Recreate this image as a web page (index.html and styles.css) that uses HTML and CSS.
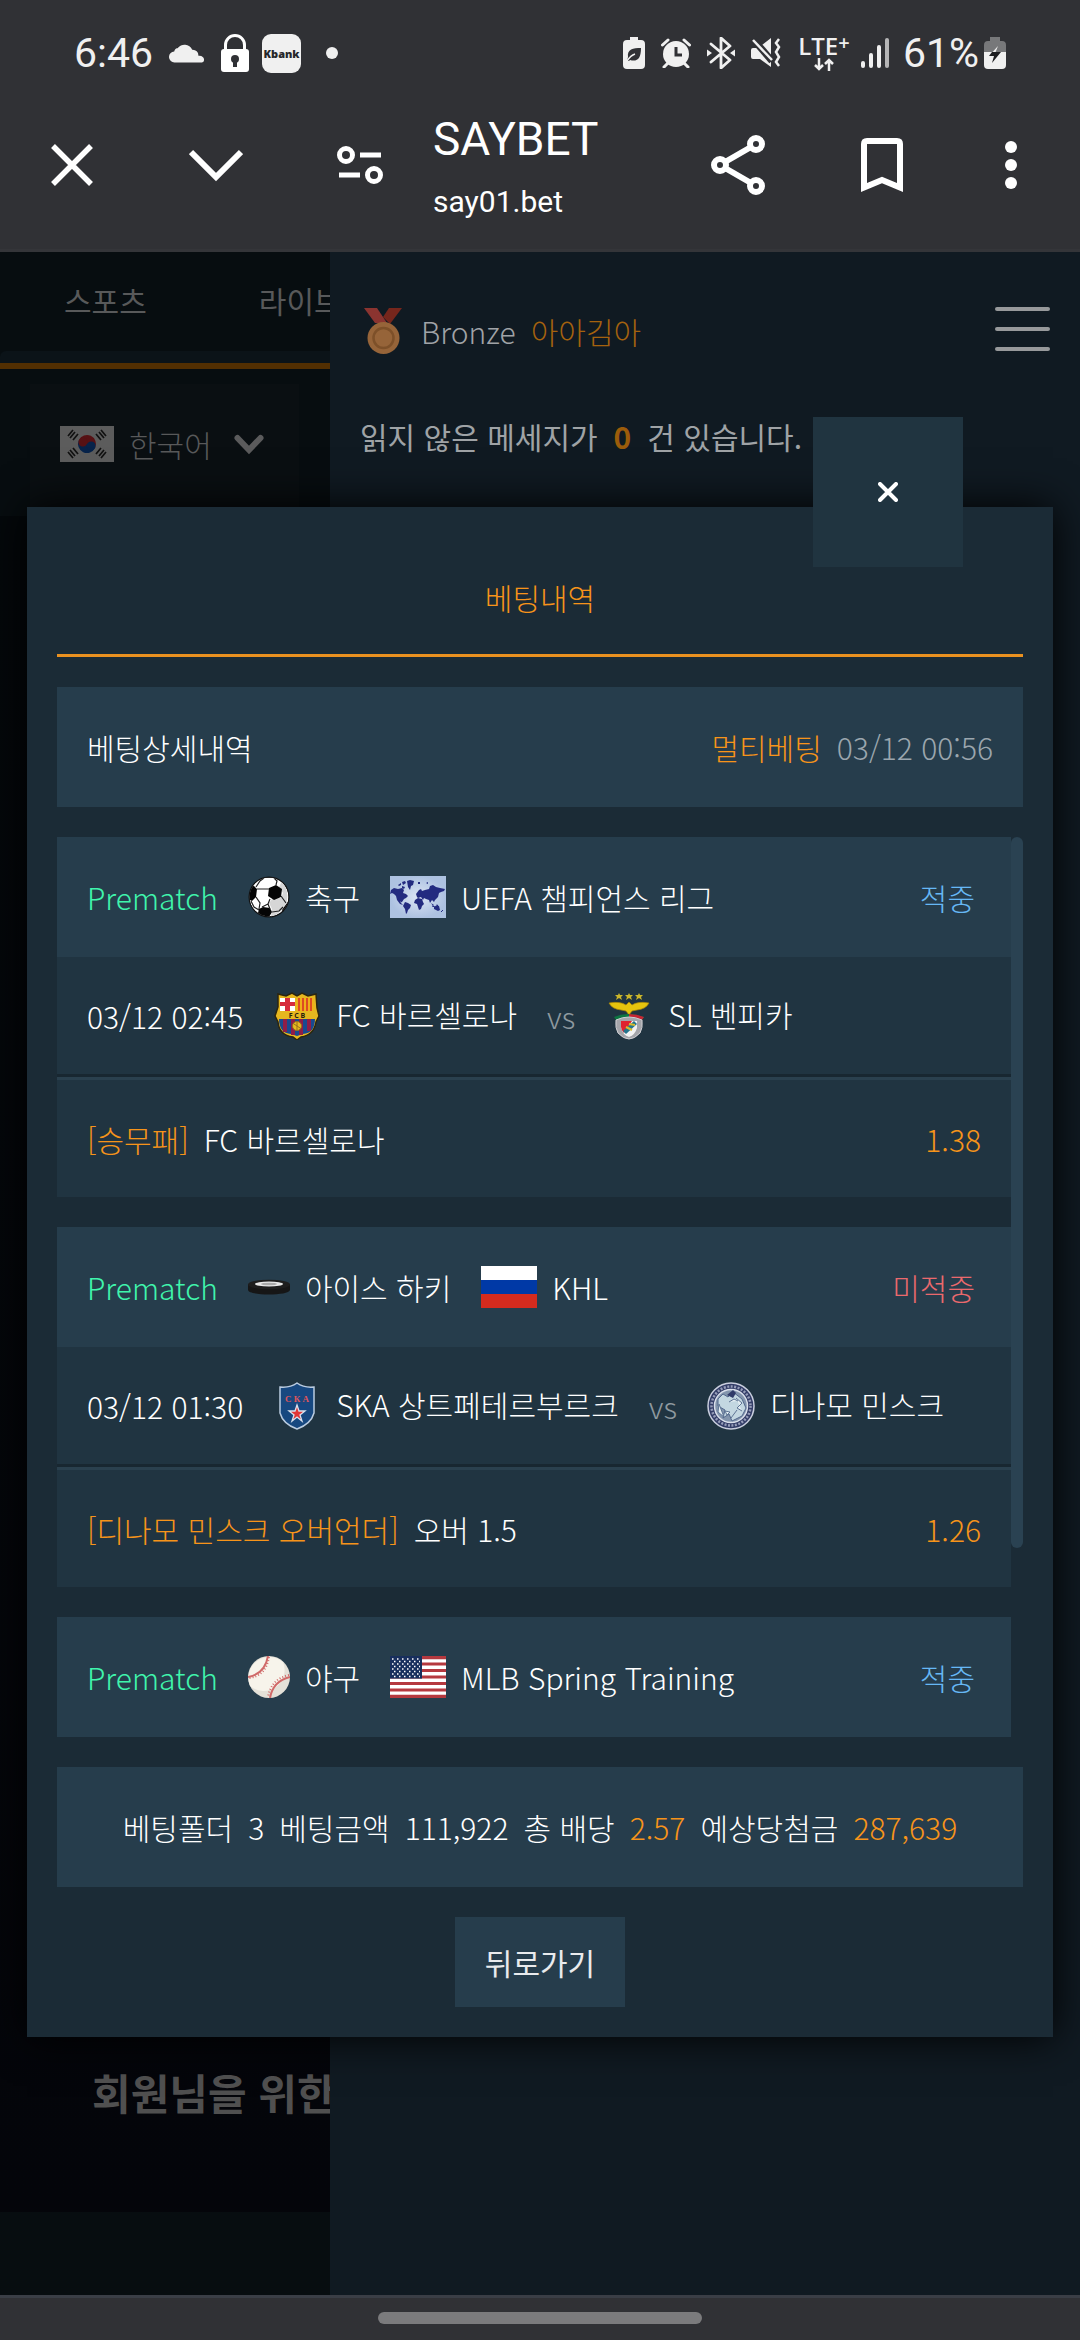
FILE: index.html
```html
<!DOCTYPE html>
<html lang="ko">
<head>
<meta charset="utf-8">
<meta name="viewport" content="width=device-width, initial-scale=1">
<title>SAYBET</title>
<link rel="stylesheet" href="styles.css">
</head>
<body>
<header class="browser">
  <div class="status">
    <span class="clock">6:46</span>
    <svg class="cloud" width="36" height="22" viewBox="0 0 38 22" fill="#f0f0f0"><path d="M6 21a5.600 5.600 0 0 1-.5-11.500C6 7 7.500 5.500 9 6A9 9 0 0 1 24.500 7.500 6 6 0 0 1 31 14c3.500-.5 6 1.500 6 4s-1.500 3-4 3z"/></svg>
    <svg class="lock" width="28" height="38" viewBox="0 0 28 38"><path d="M4.500 17V11a9.500 9.500 0 0 1 19 0v6" fill="none" stroke="#fff" stroke-width="3"/><rect y="15" width="28" height="23" rx="3" fill="#fff"/><circle cx="14" cy="25" r="4" fill="#303135"/><path d="M12 25h4v8h-4z" fill="#303135"/></svg>
    <span class="kbank">Kbank</span>
    <span class="dot"></span>
    <span class="spacer"></span>
    <svg width="22" height="32" viewBox="0 0 22 32"><path d="M7 0h8v3h3a4 4 0 0 1 4 4v21a4 4 0 0 1-4 4H4a4 4 0 0 1-4-4V7a4 4 0 0 1 4-4h3z" fill="#f0f0f0"/><path d="M18 11c-8 0-14 1-13 9l-1 4h2l1-1c7 2 11-1 11-12z" fill="#303135"/><path d="M4 24c2-3 5-6 8-7" stroke="#f0f0f0" stroke-width="1.500" fill="none"/></svg>
    <svg width="30" height="30" viewBox="0 0 30 30"><circle cx="15" cy="16" r="13" fill="#f0f0f0"/><path d="M1.500 7 7 2M28.500 7 23 2M3 29l4-4M27 29l-4-4" stroke="#f0f0f0" stroke-width="3" stroke-linecap="round"/><path d="M15 9v8h6" stroke="#303135" stroke-width="3" fill="none"/></svg>
    <svg width="28" height="32" viewBox="0 0 28 32"><path d="m4 7 19 16-9 8V1l9 8L4 25" fill="none" stroke="#f0f0f0" stroke-width="2.800" stroke-linejoin="round" stroke-linecap="round"/><path d="m0 12.500 5 3.500-5 3.500zM28 12.500 23 16l5 3.500z" fill="#f0f0f0"/></svg>
    <svg width="30" height="30" viewBox="0 0 30 30"><path d="M0 12q0-2 2-2h5L20 0v29L9 21H2q-2 0-2-2z" fill="#f0f0f0"/><path d="m2 1 19 22" stroke="#303135" stroke-width="7"/><path d="m2 2 19 20" stroke="#f0f0f0" stroke-width="2.500"/><path d="m28 1-3 4 3 4-3 5 3 5-3 5 3 4" fill="none" stroke="#f0f0f0" stroke-width="2.500"/></svg>
    <span class="lte"><b>LTE<sup>+</sup></b><svg width="20" height="13" viewBox="0 0 20 13" fill="none" stroke="#f0f0f0" stroke-width="2.500"><path d="M5 0v11M1 7l4 4 4-4M15 13V2M11 6l4-4 4 4"/></svg></span>
    <svg class="signal" width="28" height="30" viewBox="0 0 28 30"><g stroke-width="4" stroke-linecap="round" stroke="#f0f0f0"><path d="M2 25v3M10 17v11M18 9v19"/><path d="M26 2v26" stroke="#b5b5b6"/></g></svg>
    <span class="battery-text">61%</span>
    <svg class="battery" width="22" height="32" viewBox="0 0 22 32"><path d="M6 0h10v4h2a4 4 0 0 1 4 4v8H0V8a4 4 0 0 1 4-4h2z" fill="#77787a"/><path d="M0 15h22v13a4 4 0 0 1-4 4H4a4 4 0 0 1-4-4z" fill="#f0f0f0"/><path d="M14 9 5 19h5z" fill="#f0f0f0"/><path d="M10 15h7L8 26l2-7H5l3-4z" fill="#1c1d20"/></svg>
  </div>
  <div class="toolbar">
    <button aria-label="닫기"><svg width="42" height="42" viewBox="0 0 42 42"><path d="m2 2 38 38M40 2 2 40" stroke="#fff" stroke-width="5.500"/></svg></button>
    <button class="collapse" aria-label="최소화"><svg width="54" height="33" viewBox="0 0 54 33"><path d="m2 3 25 25L52 3" fill="none" stroke="#fff" stroke-width="6"/></svg></button>
    <button class="tune" aria-label="사이트 정보"><svg width="46" height="38" viewBox="0 0 46 38" fill="none" stroke="#fff" stroke-width="5"><circle cx="9" cy="9" r="6.500"/><circle cx="37" cy="29" r="6.500"/><path d="M23 9h21M2 29h21"/></svg></button>
    <div class="site"><div class="site-name">SAYBET</div><div class="site-url">say01.bet</div></div>
    <button aria-label="공유"><svg width="54" height="60" viewBox="0 0 54 60" fill="none" stroke="#fff" stroke-width="6"><circle cx="45" cy="9" r="6"/><circle cx="9" cy="30" r="6"/><circle cx="45" cy="51" r="6"/><path d="m14 27 26-15M14 33l26 15"/></svg></button>
    <button class="bookmark" aria-label="북마크"><svg width="42" height="54" viewBox="0 0 42 54"><path d="M3 49.500V6q0-3 3-3h30q3 0 3 3v43.500L21 42z" fill="none" stroke="#fff" stroke-width="6"/></svg></button>
    <button class="more" aria-label="더보기"><svg width="12" height="48" viewBox="0 0 12 48" fill="#fff"><circle cx="6" cy="6" r="6"/><circle cx="6" cy="24" r="6"/><circle cx="6" cy="42" r="6"/></svg></button>
  </div>
</header>

<main class="page">
  <section class="site-bg">
    <nav class="tabs"><a href="#">스포츠</a><a href="#">라이브</a></nav>
    <div class="tab-scroll"></div>
    <div class="lang-wrap">
      <button class="lang">
        <svg width="54" height="36" viewBox="0 0 54 36"><path fill="#5c5c5c" d="M0 0h54v36H0z"/><g transform="rotate(25 27 18)"><path d="M18 18a9 9 0 0 1 18 0z" fill="#561114"/><path d="M18 18a9 9 0 0 0 18 0z" fill="#07234a"/><circle cx="22.500" cy="18" r="4.500" fill="#561114"/><circle cx="31.500" cy="18" r="4.500" fill="#07234a"/></g><g stroke="#111" stroke-width="1.700"><path d="m8 10 5-6m-3 8 5-6m-2 8 5-6M46 10l-5-6m3 8-5-6m2 8-5-6M8 26l5 6m-3-8 5 6m-2-8 5 6M46 26l-5 6m3-8-5 6m2-8-5 6"/></g></svg>
        <span>한국어</span>
        <svg class="chev" width="30" height="21" viewBox="0 0 30 21"><path d="m3.500 4 11.500 12L26.500 4" fill="none" stroke="#5b5b5c" stroke-width="6" stroke-linecap="round"/></svg>
      </button>
    </div>
    <div class="hero"><h2>회원님을 위한</h2></div>
  </section>

  <aside class="panel">
    <div class="user">
      <svg class="medal" width="38" height="46" viewBox="0 0 38 46"><path d="M0 0h13l10 15h-12z" fill="#8b3430"/><path d="M25 0h13L26 16l-7-7z" fill="#76261c"/><circle cx="19.500" cy="30" r="16" fill="#966439"/><circle cx="19.500" cy="30" r="10" fill="#966439" stroke="#7d5029" stroke-width="2.500"/></svg>
      <span class="grade">Bronze</span><span class="nick">아아김아</span>
      <button class="menu" aria-label="메뉴"><i></i><i></i><i></i></button>
    </div>
    <p class="message">읽지 않은 메세지가<b>0</b>건 있습니다.</p>
  </aside>

  <section class="modal" role="dialog" aria-labelledby="modal-title">
    <button class="modal-close" aria-label="닫기"><svg width="20" height="20" viewBox="0 0 20 20"><path d="m2 2 16 16M18 2 2 18" stroke="#fff" stroke-width="4" stroke-linecap="round"/></svg></button>
    <h1 id="modal-title">베팅내역</h1>
    <div class="bar">
      <span>베팅상세내역</span>
      <span class="when"><span class="accent">멀티베팅</span><time>03/12 00:56</time></span>
    </div>

    <div class="scroller">
      <div class="bets">
        <article class="bet">
          <div class="bar">
            <div class="league">
              <span class="kind">Prematch</span>
              <span class="tag"><svg width="42" height="42" viewBox="0 0 42 42"><defs><clipPath id="ball"><circle cx="21" cy="21" r="19.500"/></clipPath></defs><circle cx="21" cy="21" r="20.500" fill="#111"/><g clip-path="url(#ball)"><circle cx="21" cy="21" r="19.500" fill="#fff"/><path d="M34 5q7 10 5 20-4 12-16 16l1-8-3-6 4-5h8l2-5-4-6z" fill="#d6d6d6"/><g fill="#050505"><path d="m21 12 7-3 6 4-1 8-7 3-6-4zM0 11l6-1 3 3-1 8-4 4-4-2zM11 33l4-2 7 1 2 4-3 5h-7l-4-4zM13 1l8-1 8 1-3 1H16zM39 27l2-3v5l-6 8-1-3z"/></g><path d="M9 13h12M8 21l4 6-1 6M22 23l-2 5 2 5M33 20l5 7M8 11l4-6 4-3M28 9l1-4-3-3M12 27l-1 6M3 25l3 6 5 3M24 36l7-1 4-4M20 28l-6 3" fill="none" stroke="#222" stroke-width="1.200"/></g></svg>축구</span>
              <span class="tag"><svg width="56" height="42" viewBox="0 0 56 42"><defs><radialGradient id="sea"><stop stop-color="#dbe4f4"/><stop offset="1" stop-color="#adc2e1"/></radialGradient></defs><path fill="url(#sea)" d="M0 0h56v42H0z"/><g fill="#232b80"><path d="m1 14 3-2 4 1 4-1 2 2-1 3 3 1 2 2-2 2-2 1-2 3-2-1 1 2 2 2-3-1-3-4-1-4-2-2-2-1-2 1zM8 9l3-2v2l-2 1zM12 6l3-1 1 2-3 2zM12 10l3 1-1 2-2-1zM17 5l3-1 4 1-1 4-2 1-1 4-2-3zM15 26l3 1 3 2-1 3-2 2-1 3-1 1-1-5-2-3z"/><path d="m26 18 3-4 2-1 1 2 3-1 4-1 1-3 3-1 3 2 4 1 5 1-1 2-3 1-2 1-1 4-3 3-1 2-2-2-2 3-1-3-3-1-2-1-1 2-2-3-3 1-1-1zM25 24l3-2 4 1 1 3 1 2-2 2-1 3-2 1-2-6-3-1zM44 31l3-2 2 1 1 4-2 1-4-2zM41 27l3 2-1 1zM46 28l2 1v1zM28 6h2v2h-2zM36 7l2-1v2z"/></g><path d="m51 36 2-2M42 30l3 1M9 24l3 2" stroke="#232b80"/></svg>UEFA 챔피언스 리그</span>
            </div>
            <span class="result win">적중</span>
          </div>
          <div class="match">
            <time>03/12 02:45</time>
            <span class="team"><svg width="48" height="48" viewBox="0 0 48 48"><path d="m5 2 8 2 6-3 5 3 5-3 6 3 8-2 1 14 2 8-3 6q-2 13-15 15l-4 3-4-3Q6 43 5 30l-3-6 3-9z" fill="#e6b71f" stroke="#2c250f" stroke-width="1.500"/><path d="M7 6h15v13H7z" fill="#fff"/><path d="M12 6h5v13h-5zM7 10h15v4H7z" fill="#d72c3c"/><path d="M24 6h17v13H24z" fill="#f0b01a"/><path d="M26 6v13M30 6v13M34 6v13M38 6v13" stroke="#d62b26" stroke-width="1.500"/><path d="M6 27h36q0 14-12 15l-6 2-6-2Q6 41 6 27z" fill="#184a91"/><path d="M12 27v13M20 27v16M28 27v16M36 27v12" stroke="#8f1d48" stroke-width="4"/><circle cx="24" cy="34" r="4.500" fill="#e8ba20" stroke="#98701b"/><path d="m21 32 6 4M24 30v8" stroke="#98701b"/><text x="24" y="26" text-anchor="middle" class="crest-text" fill="#2a210d">F C B</text></svg><span>FC 바르셀로나</span></span>
            <span class="vs">vs</span>
            <span class="team"><svg width="48" height="48" viewBox="0 0 48 48"><g fill="#ccb62a"><path id="s" d="m14 1 1 2h3l-2 2 1 3-3-2-3 2 1-3-2-2h3z"/><use href="#s" x="10"/><use href="#s" x="20"/></g><path d="M4 11q11-2 17 2l3-3 3 3q6-4 17-2-3 6-12 7l-5 1-3 4-3-4-5-1Q7 17 4 11z" fill="#e6c40e" stroke="#a98508" stroke-width=".7"/><path d="M9 25q13-6 30 0l-2 3q-13-4-26 0z" fill="#0d7541"/><path d="M24 22q8 0 15 3l-2 3q-7-3-13-3z" fill="#c62533"/><path d="M11 28q13-6 26 0 1 8-2 13-11 12-22 0-3-5-2-13z" fill="#a4a5aa" stroke="#d0d0d4"/><path d="M16 29h16v7q-2 7-8 9-6-2-8-9z" fill="#f3f3f3"/><path d="M16 29h11l-8 12q-3-3-3-6z" fill="#df2330"/><path d="m18 39 11-10 3 3-11 10z" fill="#23758d"/><path d="m21 35 6 3M24 32l6 1" stroke="#d8bd2d" stroke-width="2"/></svg><span>SL 벤피카</span></span>
          </div>
          <div class="pick"><span class="market">[승무패]</span><span>FC 바르셀로나</span><span class="odds">1.38</span></div>
        </article>

        <article class="bet">
          <div class="bar">
            <div class="league">
              <span class="kind">Prematch</span>
              <span class="tag"><svg width="42" height="42" viewBox="0 0 42 42"><path d="M0 18v6c1 6 41 6 42 0v-6z" fill="#161616"/><ellipse cx="21" cy="18.500" rx="21" ry="4.800" fill="#1e1e1e"/><ellipse cx="21" cy="18" rx="14" ry="2.600" fill="#e8e8e8"/><ellipse cx="21" cy="18" rx="8" ry="1.300" fill="#aaa"/></svg>아이스 하키</span>
              <span class="tag"><svg width="56" height="42" viewBox="0 0 56 42"><path fill="#fff" d="M0 0h56v14H0z"/><path fill="#0039a6" d="M0 14h56v14H0z"/><path fill="#d52b1e" d="M0 28h56v14H0z"/></svg>KHL</span>
            </div>
            <span class="result lose">미적중</span>
          </div>
          <div class="match">
            <time>03/12 01:30</time>
            <span class="team"><svg width="48" height="48" viewBox="0 0 48 48"><path d="M7 5q10 1 17-4 7 5 17 4v26q-3 11-17 16Q10 42 7 31z" fill="#174880" stroke="#b9cbe0" stroke-width="1.500"/><text x="24" y="20" text-anchor="middle" class="ska-text" fill="#e0555c">С К А</text><path d="m24 23 2 6h6l-5 4 2 6-5-4-5 4 2-6-5-4h6z" fill="#e13636" stroke="#d9e2ee" stroke-width="1.300"/></svg><span>SKA 상트페테르부르크</span></span>
            <span class="vs">vs</span>
            <span class="team"><svg width="48" height="48" viewBox="0 0 48 48"><circle cx="24" cy="24" r="23" fill="#343e68" stroke="#c9cede" stroke-width="1.500"/><circle cx="24" cy="24" r="19.500" fill="none" stroke="#969db9" stroke-width="2.500" stroke-dasharray="2 1.500"/><circle cx="24" cy="24" r="16.500" fill="#8395ad" stroke="#d9dfeb" stroke-width="1.500"/><path d="m11 17 5-5 5 3 5-5 9 7 4 9-4 8-10 5-3-7-6 4 2-8-7-4z" fill="#c3d7e1" stroke="#53688d"/><path d="m12 22 5 13-6-5zM22 20l5-3 4 2M18 29l5 1-3 3zM29 16l6 5-5 5 5 3M24 36l6-8" fill="#e3edf2" stroke="#5f7595"/><path d="m20 13 6 3 3-5-3-3z" fill="#303b69"/></svg><span>디나모 민스크</span></span>
          </div>
          <div class="pick"><span class="market">[디나모 민스크 오버언더]</span><span>오버 1.5</span><span class="odds">1.26</span></div>
        </article>

        <article class="bet">
          <div class="bar">
            <div class="league">
              <span class="kind">Prematch</span>
              <span class="tag"><svg width="42" height="42" viewBox="0 0 42 42"><circle cx="21" cy="21" r="21" fill="#e4e1d8"/><path d="M35 6a21 21 0 0 1-33 24A21 21 0 0 1 35 6z" fill="#f7f4eb"/><path d="M20 0Q17 18 0 21M42 21Q25 25 22 42" fill="none" stroke="#d06a69" stroke-width="2"/><path d="M21 1Q18 20 1 22M41 19Q23 23 20 41" fill="none" stroke="#d06a69" stroke-width="2" stroke-dasharray="1 2"/></svg>야구</span>
              <span class="tag"><svg width="56" height="42" viewBox="0 0 56 42"><path fill="#fff" d="M0 0h56v42H0z"/><path d="M0 1.600h56M0 8h56M0 14.500h56M0 21h56M0 27.500h56M0 34h56M0 40.400h56" stroke="#b5393f" stroke-width="3.200"/><path fill="#182f5d" d="M0 0h32v22.600H0z"/><g stroke="#fff" stroke-width="1.500" stroke-dasharray="1.500 3.500"><path d="M2 3h29M4 5.500h26M2 8h29M4 10.500h26M2 13h29M4 15.500h26M2 18h29M4 20.500h26"/></g></svg>MLB Spring Training</span>
            </div>
            <span class="result win">적중</span>
          </div>
        </article>
      </div>
      <div class="track"><div class="thumb"></div></div>
    </div>

    <div class="bar summary">
      <span>베팅폴더</span><span>3</span><span>베팅금액</span><span>111,922</span><span>총 배당</span><span class="accent">2.57</span><span>예상당첨금</span><span class="accent">287,639</span>
    </div>
    <button class="back">뒤로가기</button>
  </section>
</main>

<footer class="gesture"><span></span></footer>
</body>
</html>
```
FILE: styles.css
```css
* { box-sizing: border-box; }

body {
  margin: 0;
  min-height: 100vh;
  display: flex;
  flex-direction: column;
  background: #0a1013;
  color: #fff;
  font: 300 30px/42px "Noto Sans CJK KR", "Noto Sans", sans-serif;
}

button {
  margin: 0;
  padding: 0;
  border: 0;
  background: none;
  color: inherit;
  font: inherit;
}

svg { display: block; flex: none; }
a { color: inherit; text-decoration: none; }

/* Browser chrome */
.browser {
  padding-bottom: 21px;
  border-bottom: 3px solid #343539;
  background: #303135;
  font-family: Roboto, sans-serif;
}

.status {
  display: flex;
  align-items: center;
  height: 102px;
  padding: 4px 74px 0;
  gap: 16px;
  color: #f0f0f0;
}
.clock, .battery-text { font-size: 41px; font-weight: 400; line-height: 48px; }
.lock { margin-right: -3px; }
.kbank {
  width: 39px;
  height: 39px;
  border-radius: 9px;
  background: #f0f0f0;
  color: #26272a;
  font: 800 11px/39px "Open Sans", sans-serif;
  text-align: center;
}
.dot { width: 12px; height: 12px; margin-left: 9px; border-radius: 50%; background: #f0f0f0; }
.spacer { flex: 1; }
.lte { display: flex; flex-direction: column; align-items: center; width: 54px; height: 36px; }
.lte b { font: 600 24px/21px "Open Sans", sans-serif; white-space: nowrap; }
.lte sup { font-size: 20px; line-height: 0; vertical-align: 5px; }
.lte svg { margin-top: 2px; }
.signal { margin: 0 -2px 0 -6px; }
.battery { margin-left: -11px; }

.toolbar { display: flex; align-items: center; height: 126px; padding: 0 63px 0 51px; }
.collapse { margin-left: 96px; }
.tune { margin: 0 50px 0 94px; }
.site { flex: 1; padding-top: 8px; font-weight: 400; }
.site-name { font-size: 46px; line-height: 66px; }
.site-url { font-size: 30px; line-height: 60px; }
.bookmark { margin: 0 102px 0 96px; }

/* Page behind the dialog */
.page {
  position: relative;
  flex: 1;
  display: grid;
  grid-template-columns: 330px 1fr;
  overflow: hidden;
}
.site-bg { display: flex; flex-direction: column; min-width: 0; overflow: hidden; background: #070d10; }
.tabs {
  display: flex;
  gap: 112px;
  height: 99px;
  padding: 27px 64px 0;
  color: #58595a;
  font-weight: 400;
  white-space: nowrap;
}
.tab-scroll { height: 18px; border-bottom: 6px solid #522f02; border-radius: 6px 0 0 0; background: #0b1318; }
.lang-wrap { height: 147px; padding: 15px 31px 0 30px; }
.lang {
  display: flex;
  align-items: center;
  width: 100%;
  height: 132px;
  padding: 0 30px 12px;
  gap: 15px;
  background: #0a0f12;
  color: #58595a;
}
.chev { margin-left: 7px; }
.hero {
  flex: 1;
  display: flex;
  align-items: flex-end;
  margin-bottom: 83px;
  padding: 0 0 90px 92px;
  background: linear-gradient(#04080b, #04050a);
}
.hero h2 { margin: 0; color: #505050; font-size: 42px; font-weight: 700; line-height: 60px; white-space: nowrap; }

.panel { padding: 58px 30px 0; background: #101a22; }
.user { display: flex; align-items: center; height: 42px; margin-bottom: 60px; }
.medal { margin: 0 19px 0 4px; }
.grade { color: #a0a3a7; }
.nick { margin-left: 15px; color: #a5620e; }
.menu { display: flex; flex-direction: column; gap: 16px; width: 55px; margin: 0 0 4px auto; }
.menu i { height: 4px; border-radius: 2px; background: #97999b; }
.message { margin: 0; color: #9fa3a6; font-weight: 400; line-height: 48px; }
.message b { margin: 0 16px; color: #9c5c0a; font-weight: 700; }

/* Dialog */
.modal {
  position: absolute;
  top: 255px;
  left: 50%;
  width: 95%;
  transform: translateX(-50%);
  display: flex;
  flex-direction: column;
  gap: 30px;
  padding: 60px 30px 30px;
  background: #1b2b36;
  box-shadow: 0 0 40px #000;
}
.modal-close {
  position: absolute;
  top: -90px;
  right: 90px;
  display: flex;
  align-items: center;
  justify-content: center;
  width: 150px;
  height: 150px;
  background: #203440;
}
.modal h1 {
  margin: 0;
  height: 90px;
  border-bottom: 3px solid #ea9120;
  color: #f7941a;
  font-size: 30px;
  font-weight: 300;
  line-height: 60px;
  text-align: center;
}
.bar {
  display: flex;
  align-items: center;
  justify-content: space-between;
  height: 120px;
  padding: 0 30px;
  background: #263d4c;
  white-space: nowrap;
}
.accent, .market, .odds { color: #f7941a; }
.when { display: flex; gap: 15px; }
.when time { color: #9ba6ae; }

.scroller { display: flex; height: 900px; }
.bets { flex: 1; display: flex; flex-direction: column; gap: 30px; min-width: 0; overflow: hidden; }
.track { width: 12px; }
.thumb { height: 79%; border-radius: 6px; background: #2a4252; }

.league, .tag, .match, .team, .pick { display: flex; align-items: center; }
.league, .match { gap: 30px; }
.tag, .team, .pick { gap: 15px; }
.kind { color: #40f5ac; }
.result { padding-right: 6px; }
.win { color: #66b8f5; }
.lose { color: #eb696d; }

.match, .pick { height: 117px; padding: 0 30px; background: #203441; white-space: nowrap; }
.match { box-sizing: content-box; border-bottom: 3px solid #182731; }
.pick { box-sizing: content-box; border-top: 3px solid #2a404e; }
.team > span { padding-bottom: 4px; }
.vs { color: #8e999f; }
.odds { margin-left: auto; }
.crest-text { font: 700 7px "Open Sans", sans-serif; }
.ska-text { font: 700 9px "Liberation Serif", serif; }

.summary { justify-content: center; gap: 15px; }
.back {
  align-self: center;
  height: 90px;
  padding: 0 30px;
  background: #263d4c;
  color: #e9ebed;
  font-weight: 400;
}

.gesture {
  display: flex;
  justify-content: center;
  height: 45px;
  padding-top: 14px;
  border-top: 3px solid #3a3e46;
  background: #303135;
}
.gesture span { width: 30%; height: 12px; border-radius: 6px; background: #7b7b7d; }
```
